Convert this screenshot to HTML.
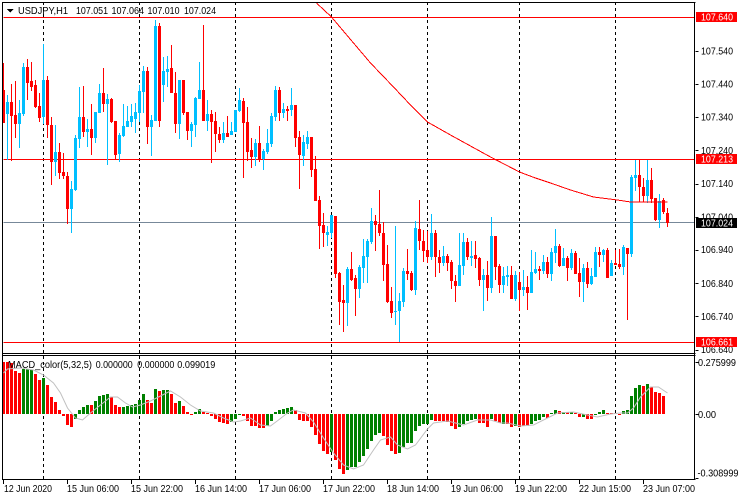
<!DOCTYPE html>
<html><head><meta charset="utf-8"><title>USDJPY,H1</title>
<style>
html,body{margin:0;padding:0;background:#fff}
svg{display:block}
text{font-family:"Liberation Sans",Arial,sans-serif;font-size:10.5px;fill:#000}
</style></head><body>
<svg width="740" height="500" viewBox="0 0 740 500" xmlns="http://www.w3.org/2000/svg">
<rect width="740" height="500" fill="#fff"/>
<g transform="translate(.5 0)" shape-rendering="crispEdges">
<path fill="none" stroke="#000" stroke-dasharray="3 3" d="M43 2V479M139 2V479M235 2V479M331 2V479M427 2V479M519 2V479M615 2V479"/>
<path fill="none" stroke="#f00" d="M3 17.5H694M3 159.5H694M3 342.5H694"/>
<path fill="none" stroke="#778899" d="M3 222.5H694"/>
<!-- candles blue -->
<path fill="none" stroke="#00bfff" d="M7 95V160M19 100V148M23 63V116M43 44V124M55 125V176M71 181V233M75 135V191M79 87V148M87 119V147M95 112V143M99 84V113M107 94V165M119 133V162M123 104V137M127 106V127M131 104V127M135 103V133M139 85V122M143 66V113M151 115V156M155 20V121M163 57V102M167 56V87M179 80V139M191 122V147M195 97V137M199 62V99M207 100V131M223 122V143M231 122V135M235 110V132M239 88V112M255 139V166M263 149V170M267 129V154M271 113V147M275 86V121M283 103V118M291 88V116M303 135V166M307 131V149M327 226V246M331 215V238M347 267V326M359 265V298M363 239V283M367 239V283M371 208V244M395 226V325M399 293V342M403 268V307M415 221V295M431 214V260M443 246V266M459 233V286M463 233V275M471 241V266M483 269V311M491 217V293M503 267V293M507 266V286M515 271V301M523 270V296M531 250V293M535 252V274M543 255V274M551 248V281M555 229V263M563 248V266M571 249V270M583 264V302M591 268V285M595 247V277M603 249V262M611 260V276M623 245V275M631 175V257M635 160V191M647 160V203M659 194V228"/>
<path fill="none" stroke="#00bfff" stroke-width="3" d="M7 102V114M19 113V124M23 67V114M43 80V117M55 152V162M71 189V209M75 138V190M79 117V139M87 129V132M95 112V138M99 93V113M107 99V104M119 135V154M123 126V136M127 121V127M131 116V122M135 112V119M139 91V113M143 71V92M151 120V127M155 26V121M163 71V85M167 69V72M179 80V124M191 124V131M195 98V125M199 90V99M207 114V121M223 133V140M231 131V135M235 110V132M239 100V111M255 143V157M263 151V159M267 143V152M271 116V144M275 90V117M283 109V113M291 105V110M303 142V156M307 137V144M327 232V235M331 215V233M347 269V303M359 267V289M363 256V268M367 241V257M371 221V242M395 311V312M399 301V311M403 271V302M415 228V290M431 233V257M443 256V263M459 265V286M463 242V266M471 256V258M483 275V280M491 236V288M503 276V285M507 275V277M515 275V299M523 287V290M531 272V293M535 269V273M543 262V271M551 252V274M555 246V253M563 258V266M571 253V268M583 268V282M591 276V284M595 252V277M603 250V255M611 263V276M623 247V267M631 177V254M635 175V178M647 180V196M659 201V220"/>
<!-- candles red -->
<path fill="none" stroke="#f00" d="M3 63V123M11 84V161M15 81V138M27 59V100M31 62V91M35 80V108M39 93V122M47 76V138M51 117V185M59 143V179M63 153V179M67 172V224M83 86V137M91 104V155M103 68V112M111 98V123M115 121V159M147 67V144M159 23V127M171 45V93M175 72V133M183 80V115M187 112V140M203 25V121M211 110V163M215 112V152M219 127V143M227 116V137M243 98V178M247 107V161M251 138V168M259 126V162M279 87V121M287 106V121M295 105V147M299 131V189M311 137V177M315 156V201M319 196V249M323 213V247M335 216V278M339 272V325M343 285V332M351 252V281M355 275V316M375 215V251M379 190V236M383 222V281M387 245V303M391 287V318M407 249V280M411 271V291M419 200V250M423 230V262M427 231V263M435 230V277M439 250V273M447 254V271M451 260V289M455 275V302M467 238V260M475 241V268M479 257V286M487 261V301M495 236V280M499 264V293M511 266V299M519 272V311M527 276V310M539 266V280M547 257V278M559 244V267M567 256V281M575 251V274M579 258V297M587 262V288M599 247V267M607 248V278M615 250V265M619 249V269M627 248V320M639 160V202M643 178V202M651 168V203M655 198V221M663 198V214M667 208V227"/>
<path fill="none" stroke="#f00" stroke-width="3" d="M3 90V123M11 102V116M15 115V124M27 67V83M31 81V87M35 85V107M39 106V118M47 80V125M51 125V162M59 152V173M63 172V176M67 176V209M83 117V132M91 129V138M103 93V104M111 99V122M115 121V155M147 71V127M159 26V121M171 68V93M175 93V124M183 80V113M187 112V131M203 90V121M211 114V122M215 121V134M219 134V140M227 133V137M243 101V123M247 122V152M251 150V157M259 143V159M279 90V113M287 109V111M295 105V138M299 137V155M311 137V170M315 169V201M319 200V226M323 225V233M335 216V274M339 273V302M343 300V303M351 269V280M355 278V289M375 221V225M379 224V233M383 233V265M387 264V302M391 301V313M407 271V274M411 273V290M419 229V241M423 241V251M427 250V257M435 233V257M439 257V263M447 256V263M451 262V281M455 281V286M467 242V257M475 255V259M479 258V280M487 275V288M495 236V267M499 266V285M511 275V299M519 282V290M527 287V293M539 269V271M547 262V274M559 246V266M567 258V268M575 253V274M579 273V282M587 268V284M599 252V255M607 250V278M615 263V265M619 264V267M627 248V254M639 175V187M643 187V196M651 180V199M655 198V220M663 200V212M667 213V223"/>
<!-- MA -->
<polyline fill="none" stroke="#f00" points="316,3 331,17 353,43 370,63 393,87 410,105 427,122 450,135 470,146 490,157 519,172 535,178 550,183 570,190 593,197 617,200 630,202 667,202"/>
<!-- MACD histogram -->
<path fill="none" stroke="#f00" stroke-width="3" d="M3 362V414M7 362V414M11 363V414M15 371V414M19 373V414M35 374V414M39 380V414M47 385V414M51 397V414M55 402V414M59 410V414M63 414V416M67 414V425M71 414V427M91 405V414M111 397V414M115 405V414M119 407V414M147 400V414M151 403V414M159 391V414M171 394V414M175 403V414M183 406V414M187 412V414M191 414V415M203 412V414M207 413V414M211 414V416M215 414V419M219 414V422M223 414V423M227 414V424M243 414V416M247 414V421M251 414V426M255 414V426M259 414V428M263 414V428M295 410V414M299 414V420M303 414V421M307 414V421M311 414V427M315 414V435M319 414V444M323 414V451M327 414V454M335 414V460M339 414V469M343 414V474M383 414V436M387 414V445M391 414V451M395 414V454M435 414V421M439 414V421M443 414V421M447 414V422M451 414V426M455 414V429M479 414V423M483 414V423M487 414V427M495 414V421M499 414V423M507 414V424M511 414V427M519 414V427M523 414V426M527 414V426M547 414V418M559 411V414M567 412V414M575 413V414M579 414V417M587 414V419M591 414V419M607 413V414M611 413V414M615 413V414M619 414V415M643 386V414M651 387V414M655 392V414M659 393V414M663 396V414"/>
<path fill="none" stroke="#008000" stroke-width="3" d="M23 369V414M27 369V414M31 370V414M43 378V414M75 414V419M79 410V414M83 407V414M87 405V414M95 401V414M99 396V414M103 395V414M107 394V414M123 407V414M127 406V414M131 405V414M135 404V414M139 400V414M143 394V414M155 389V414M163 390V414M167 390V414M179 401V414M195 412V414M199 409V414M231 414V422M235 414V419M239 414V415M267 414V426M271 414V421M275 412V414M279 410V414M283 409V414M287 408V414M291 407V414M331 414V452M347 414V470M351 414V467M355 414V467M359 414V462M363 414V456M367 414V449M371 414V441M375 414V435M379 414V433M399 414V453M403 414V447M407 414V443M411 414V443M415 414V431M419 414V426M423 414V424M427 414V424M431 414V420M459 414V427M463 414V424M467 414V421M471 414V420M475 414V419M491 414V419M503 414V424M515 414V426M531 414V424M535 414V421M539 414V420M543 414V417M551 413V414M555 410V414M563 412V414M571 412V414M583 414V417M595 414V415M599 412V414M603 410V414M623 411V414M627 410V414M631 396V414M635 388V414M639 385V414M647 384V414"/>
<polyline fill="none" stroke="#c0c0c0" shape-rendering="auto" points="3,373 7,369 20,368 33,370 43,375 53,383 60,393 67,408 75,418 82,420 90,413 100,405 110,397 117,397 125,403 132,407 140,405 150,401 160,396 170,391 180,397 190,405 200,411 213,413 223,418 233,422 240,421 250,418 260,425 270,426 278,420 287,413 293,410 305,413 313,422 323,438 333,453 343,465 353,469 363,465 373,450 380,440 390,437 397,445 407,449 415,445 427,429 433,423 447,421 463,425 477,420 490,420 500,423 507,423 520,426 533,425 547,418 557,413 573,412 587,415 597,417 610,414 620,413 627,413 633,408 640,397 650,387 658,387 667,393"/>
<!-- frames -->
<path fill="none" stroke="#000" d="M2 2.5H695M2 353.5H695M2 355.5H695M2 479.5H695M2 2V480M694 2V480"/>
<path fill="none" stroke="#000" d="M695 51.5H698M695 84.5H698M695 117.5H698M695 150.5H698M695 184.5H698M695 217.5H698M695 250.5H698M695 283.5H698M695 316.5H698M695 350.5H698M695 362.5H698M695 414.5H698M695 478.5H698M3 480V484M67 480V484M131 480V484M195 480V484M259 480V484M323 480V484M387 480V484M451 480V484M515 480V484M579 480V484M643 480V484"/>
<polygon points="6,9 13,9 9.5,12.5" fill="#000"/>
</g>
<text x="18" y="14" textLength="50" lengthAdjust="spacingAndGlyphs">USDJPY,H1</text>
<text x="76" y="14" textLength="32" lengthAdjust="spacingAndGlyphs">107.051</text>
<text x="111.5" y="14" textLength="32.5" lengthAdjust="spacingAndGlyphs">107.064</text>
<text x="147.5" y="14" textLength="32" lengthAdjust="spacingAndGlyphs">107.010</text>
<text x="184" y="14" textLength="32" lengthAdjust="spacingAndGlyphs">107.024</text>
<text x="8" y="368" textLength="84" lengthAdjust="spacingAndGlyphs">MACD_color(5,32,5)</text>
<text x="95.7" y="368" textLength="37" lengthAdjust="spacingAndGlyphs">0.000000</text>
<text x="137.3" y="368" textLength="37" lengthAdjust="spacingAndGlyphs">0.000000</text>
<text x="177.3" y="368" textLength="38" lengthAdjust="spacingAndGlyphs">0.099019</text>
<g>
<text x="701" y="54.5" textLength="32" lengthAdjust="spacingAndGlyphs">107.540</text>
<text x="701" y="87.5" textLength="32" lengthAdjust="spacingAndGlyphs">107.440</text>
<text x="701" y="120.5" textLength="32" lengthAdjust="spacingAndGlyphs">107.340</text>
<text x="701" y="154" textLength="32" lengthAdjust="spacingAndGlyphs">107.240</text>
<text x="701" y="187" textLength="32" lengthAdjust="spacingAndGlyphs">107.140</text>
<text x="701" y="220.5" textLength="32" lengthAdjust="spacingAndGlyphs">107.040</text>
<text x="701" y="253" textLength="32" lengthAdjust="spacingAndGlyphs">106.940</text>
<text x="701" y="287" textLength="32" lengthAdjust="spacingAndGlyphs">106.840</text>
<text x="701" y="320" textLength="32" lengthAdjust="spacingAndGlyphs">106.740</text>
<text x="701" y="353" textLength="32" lengthAdjust="spacingAndGlyphs">106.640</text>
<rect x="696" y="12" width="41" height="10" fill="#f00"/>
<text x="701" y="20.5" textLength="32" lengthAdjust="spacingAndGlyphs" style="fill:#fff">107.640</text>
<rect x="696" y="154" width="41" height="10" fill="#f00"/>
<text x="701" y="162.5" textLength="32" lengthAdjust="spacingAndGlyphs" style="fill:#fff">107.213</text>
<rect x="696" y="218" width="41" height="10" fill="#000"/>
<text x="701" y="226.5" textLength="32" lengthAdjust="spacingAndGlyphs" style="fill:#fff">107.024</text>
<rect x="696" y="337" width="41" height="10" fill="#f00"/>
<text x="701" y="345.5" textLength="32" lengthAdjust="spacingAndGlyphs" style="fill:#fff">106.661</text>
<text x="698" y="366" textLength="38" lengthAdjust="spacingAndGlyphs">0.275999</text>
<text x="698" y="418" textLength="18" lengthAdjust="spacingAndGlyphs">0.00</text>
<text x="697.5" y="476.5" textLength="41" lengthAdjust="spacingAndGlyphs">-0.308999</text>
</g>
<g>
<text x="4" y="492" textLength="48" lengthAdjust="spacingAndGlyphs">12 Jun 2020</text>
<text x="67" y="492" textLength="52" lengthAdjust="spacingAndGlyphs">15 Jun 06:00</text>
<text x="131" y="492" textLength="52" lengthAdjust="spacingAndGlyphs">15 Jun 22:00</text>
<text x="195" y="492" textLength="52" lengthAdjust="spacingAndGlyphs">16 Jun 14:00</text>
<text x="259" y="492" textLength="52" lengthAdjust="spacingAndGlyphs">17 Jun 06:00</text>
<text x="323" y="492" textLength="52" lengthAdjust="spacingAndGlyphs">17 Jun 22:00</text>
<text x="387" y="492" textLength="52" lengthAdjust="spacingAndGlyphs">18 Jun 14:00</text>
<text x="451" y="492" textLength="52" lengthAdjust="spacingAndGlyphs">19 Jun 06:00</text>
<text x="515" y="492" textLength="52" lengthAdjust="spacingAndGlyphs">19 Jun 22:00</text>
<text x="579" y="492" textLength="52" lengthAdjust="spacingAndGlyphs">22 Jun 15:00</text>
<text x="643" y="492" textLength="52" lengthAdjust="spacingAndGlyphs">23 Jun 07:00</text>
</g>
</svg>
</body></html>
